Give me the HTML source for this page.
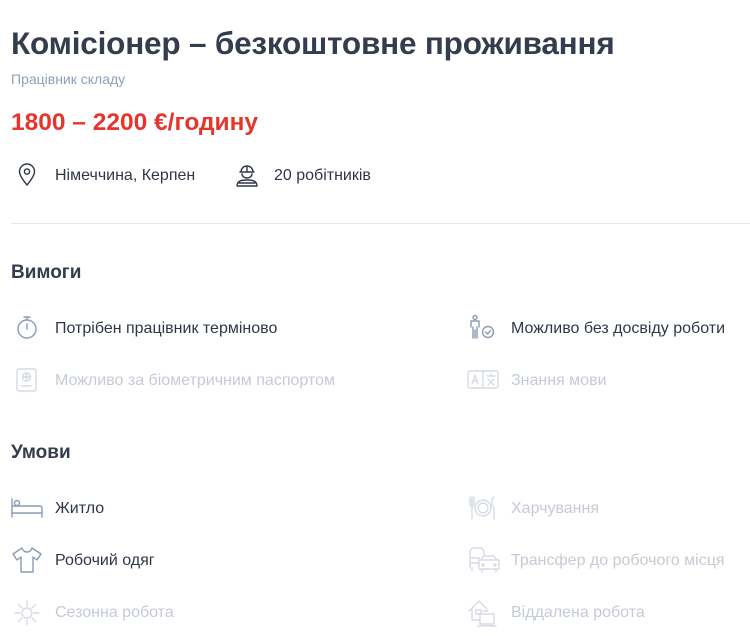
<!DOCTYPE html><html><head><meta charset="utf-8"><style>
body{margin:0;width:750px;height:636px;background:#fff;font-family:"Liberation Sans",sans-serif;position:relative;overflow:hidden;color:#2f3747}
.a{position:absolute;white-space:nowrap}
h1{position:absolute;left:11px;top:25px;margin:0;font-size:31.5px;font-weight:bold;color:#343d4e;letter-spacing:-0.2px}
.sub{left:11px;top:71px;font-size:14px;color:#8fa0b8}
.price{left:11px;top:109px;font-size:24.5px;font-weight:bold;color:#e5352c}
.t{font-size:16px;line-height:18px}
.h{font-size:19px;font-weight:bold;color:#343d4e}
.dim{color:#c5cbd4}
svg{position:absolute;fill:none;stroke-width:1.4;stroke-linecap:round;stroke-linejoin:round}
.ic{stroke:#8a9bb3}.id{stroke:#d6dbe3}.ik{stroke:#2f3747}
</style></head><body>
<h1>Комісіонер – безкоштовне проживання</h1>
<div class="a sub">Працівник складу</div>
<div class="a price">1800 – 2200 €/годину</div>

<svg class="ik" style="left:16px;top:163px" width="22" height="24" viewBox="0 0 22 24"><path d="M11 22C6 16 3.5 12 3.5 8.5a7.5 7.5 0 0 1 15 0C18.5 12 16 16 11 22z"/><circle cx="11" cy="8.5" r="2.6"/></svg>
<div class="a t" style="left:55px;top:167px">Німеччина, Керпен</div>
<svg class="ik" style="left:234px;top:162px" width="26" height="26" viewBox="0 0 26 26"><path d="M7 10a6 6 0 0 1 12 0zM6 10h14M13 4v6M8 12a5 4 0 0 0 10 0M3 24c0-5 4-6 10-6s10 1 10 6zM5 21h16"/></svg>
<div class="a t" style="left:274px;top:167px">20 робітників</div>

<div class="a" style="left:11px;top:223px;width:739px;height:1px;background:#e3e6ea"></div>

<div class="a h" style="left:11px;top:262px">Вимоги</div>
<svg class="ic" style="left:15px;top:314px" width="24" height="26" viewBox="0 0 24 26"><circle cx="12" cy="15" r="9"/><path d="M12 15V10M9 3h6M12 3v3"/></svg>
<div class="a t" style="left:55px;top:320px">Потрібен працівник терміново</div>
<svg class="ic" style="left:468px;top:314px" width="28" height="26" viewBox="0 0 28 26"><circle cx="7" cy="3.5" r="2"/><path d="M3 13V7h8v6M5 13v11M9 13v11M7 16v8"/><circle cx="20" cy="18" r="5.5"/><path d="M17.5 18l2 2 3-3.5"/></svg>
<div class="a t" style="left:511px;top:320px">Можливо без досвіду роботи</div>

<svg class="id" style="left:15px;top:367px" width="24" height="26" viewBox="0 0 24 26"><rect x="2" y="2" width="19" height="22" rx="2"/><circle cx="11.5" cy="10" r="4"/><path d="M7.5 10h8M11.5 6v8M7 19h9"/></svg>
<div class="a t dim" style="left:55px;top:372px">Можливо за біометричним паспортом</div>
<svg class="id" style="left:467px;top:369px" width="32" height="22" viewBox="0 0 32 22"><rect x="1" y="2" width="30" height="17" rx="2"/><path d="M16 2v17M5 15l3-9 3 9M6 12h4M20 7h8M24 5v2M21 10l6 6M27 10l-6 6"/></svg>
<div class="a t dim" style="left:511px;top:372px">Знання мови</div>

<div class="a h" style="left:11px;top:442px">Умови</div>
<svg class="ic" style="left:11px;top:497px" width="32" height="22" viewBox="0 0 32 22"><path d="M1 2v18M1 16h30v4M13 9h16a2 2 0 0 1 2 2v5M1 9h12"/><circle cx="6" cy="6" r="2.5"/></svg>
<div class="a t" style="left:55px;top:500px">Житло</div>
<svg class="id" style="left:467px;top:495px" width="32" height="26" viewBox="0 0 32 26"><path d="M3 2v7a2 2 0 0 0 4 0V2M5 2v22M27 2c-3 2-3 9 0 11v11"/><circle cx="16" cy="13" r="8"/><circle cx="16" cy="13" r="5"/></svg>
<div class="a t dim" style="left:511px;top:500px">Харчування</div>

<svg class="ic" style="left:11px;top:546px" width="32" height="28" viewBox="0 0 32 28"><path d="M11 2l-9 6 4 6 4-3v15h12V11l4 3 4-6-9-6c-1 3-3 4-5 4s-4-1-5-4z"/></svg>
<div class="a t" style="left:55px;top:552px">Робочий одяг</div>
<svg class="id" style="left:467px;top:546px" width="34" height="28" viewBox="0 0 34 28"><path d="M3 22V6a4 4 0 0 1 4-4h6a4 4 0 0 1 4 4v4M3 12h10M3 17h8M5 22v3M14 14l3-4h10l3 4M12 14h20v9H12zM15 23v3M29 23v3"/><circle cx="16" cy="19" r="1"/><circle cx="28" cy="19" r="1"/></svg>
<div class="a t dim" style="left:511px;top:552px">Трансфер до робочого місця</div>

<svg class="id" style="left:13px;top:599px" width="28" height="28" viewBox="0 0 28 28"><circle cx="14" cy="14" r="5"/><path d="M14 2v5M14 21v5M2 14h5M21 14h5M5.5 5.5l3.5 3.5M19 19l3.5 3.5M5.5 22.5L9 19M19 9l3.5-3.5"/></svg>
<div class="a t dim" style="left:55px;top:604px">Сезонна робота</div>
<svg class="id" style="left:467px;top:598px" width="32" height="30" viewBox="0 0 32 30"><path d="M2 13L12 3l8 8M5 10v12h7M13 16h14v10H13zM11 28h18M16 13h5"/><rect x="9" y="12" width="5" height="4"/></svg>
<div class="a t dim" style="left:511px;top:604px">Віддалена робота</div>
</body></html>
